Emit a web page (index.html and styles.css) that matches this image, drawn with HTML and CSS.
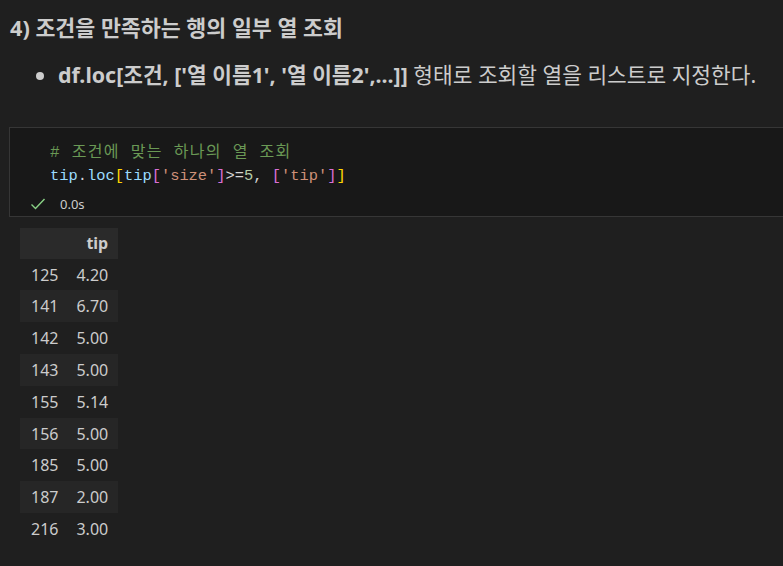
FILE: index.html
```html
<!DOCTYPE html>
<html lang="ko">
<head>
<meta charset="utf-8">
<link rel="stylesheet" href="styles.css">
</head>
<body>
<div class="md">
  <h4 class="title">4) 조건을 만족하는 행의 일부 열 조회</h4>
  <ul class="list">
    <li><b>df.loc[조건, ['열 이름1', '열 이름2',...]]</b> 형태로 조회할 열을 리스트로 지정한다.</li>
  </ul>
</div>
<div class="cell">
  <pre class="code"><span class="cm"># 조건에 맞는 하나의 열 조회</span>
<span class="v">tip</span><span class="p">.</span><span class="v">loc</span><span class="b1">[</span><span class="v">tip</span><span class="b2">[</span><span class="s">'size'</span><span class="b2">]</span><span class="p">&gt;=</span><span class="n">5</span><span class="p">, </span><span class="b2">[</span><span class="s">'tip'</span><span class="b2">]</span><span class="b1">]</span></pre>
  <div class="status">
    <svg class="check" width="16" height="14" viewBox="0 0 16 14"><path d="M1.5 7.5 L5.5 11.5 L14.5 2" fill="none" stroke="#89d185" stroke-width="1.4"/></svg>
    <span class="time">0.0s</span>
  </div>
</div>
<table class="df">
  <thead><tr><th></th><th>tip</th></tr></thead>
  <tbody>
    <tr><th>125</th><td>4.20</td></tr>
    <tr><th>141</th><td>6.70</td></tr>
    <tr><th>142</th><td>5.00</td></tr>
    <tr><th>143</th><td>5.00</td></tr>
    <tr><th>155</th><td>5.14</td></tr>
    <tr><th>156</th><td>5.00</td></tr>
    <tr><th>185</th><td>5.00</td></tr>
    <tr><th>187</th><td>2.00</td></tr>
    <tr><th>216</th><td>3.00</td></tr>
  </tbody>
</table>
</body>
</html>
```
FILE: styles.css
```css
html, body {
  margin: 0;
  padding: 0;
  background: #1f1f1f;
  color: #cccccc;
  font-family: "Noto Sans", "Noto Sans CJK KR", sans-serif;
  overflow: hidden;
}
.md {
  padding: 13px 10px 0 10px;
}
.title {
  margin: 0;
  font-size: 21.7px;
  line-height: 30px;
  font-weight: 700;
  color: #cccccc;
}
.list {
  margin: 17px 0 0 0;
  padding-left: 48px;
  font-size: 21.4px;
  line-height: 30px;
}
.list b {
  font-weight: 700;
}
.cell {
  margin: 37px -10px 0 9px;
  background: #181818;
  border: 1px solid #363636;
  height: 90px;
  box-sizing: border-box;
  padding-top: 14px;
}
.code {
  margin: 0 0 0 40px;
  font-family: "Liberation Mono", "Noto Sans CJK KR", monospace;
  font-size: 15.4px;
  line-height: 23px;
  color: #d4d4d4;
}
.cm { color: #6a9955; letter-spacing: 1.3px; font-size: 16px; }
.v { color: #9cdcfe; }
.p { color: #d4d4d4; }
.s { color: #ce9178; }
.n { color: #b5cea8; }
.b1 { color: #ffd700; }
.b2 { color: #da70d6; }
.status {
  display: flex;
  align-items: center;
  margin: 8px 0 0 20px;
  height: 16px;
}
.check { display: block; }
.time {
  margin-left: 14px;
  font-size: 13px;
  color: #cccccc;
}
.df {
  margin: 11px 0 0 20px;
  border-collapse: collapse;
  font-size: 16px;
  color: #cccccc;
}
.df th, .df td {
  text-align: right;
  padding: 0 10px 0 11px;
  height: 31.8px;
  font-weight: 400;
}
.df td { padding-left: 8px; }
.df thead th {
  height: 30.7px;
  font-weight: 700;
  background: #2a2a2a;
}
.df tbody tr:nth-child(even) {
  background: #262626;
}
```
